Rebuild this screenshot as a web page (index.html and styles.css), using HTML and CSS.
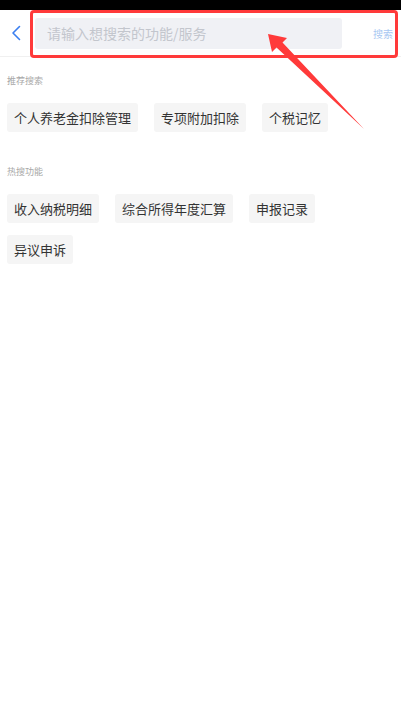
FILE: index.html
```html
<!DOCTYPE html>
<html lang="zh-CN">
<head>
<meta charset="utf-8">
<title>搜索</title>
<link rel="stylesheet" href="styles.css">
</head>
<body>
<div class="page">
  <div class="statusbar"></div>
  <div class="header">
    <div class="back">
      <svg width="10" height="16" viewBox="0 0 10 16"><path d="M8.5 1.5 L2 8 L8.5 14.5" fill="none" stroke="#3a7ff0" stroke-width="1.6" stroke-linecap="round" stroke-linejoin="round"/></svg>
    </div>
    <div class="search-input">请输入想搜索的功能/服务</div>
    <div class="search-btn">搜索</div>
  </div>
  <div class="content">
    <div class="section">
      <div class="label">推荐搜索</div>
      <div class="tags">
        <span class="tag">个人养老金扣除管理</span>
        <span class="tag">专项附加扣除</span>
        <span class="tag">个税记忆</span>
      </div>
    </div>
    <div class="section">
      <div class="label">热搜功能</div>
      <div class="tags">
        <span class="tag">收入纳税明细</span>
        <span class="tag">综合所得年度汇算</span>
        <span class="tag">申报记录</span>
        <span class="tag">异议申诉</span>
      </div>
    </div>
  </div>
  <div class="highlight"></div>
  <svg class="pointer" width="401" height="140" viewBox="0 0 401 140">
    <polygon points="268,34 287,38 282.5,42.5 364,129 276.5,47.5 272,52" fill="#ff3a3a"/>
  </svg>
</div>
</body>
</html>
```
FILE: styles.css
```css
html, body {
  margin: 0;
  padding: 0;
  background: #fff;
}
body {
  font-family: "Noto Sans CJK SC", "Noto Sans", sans-serif;
  color: #333;
}
.page {
  position: relative;
  width: 401px;
  height: 720px;
  overflow: hidden;
  background: #fff;
}
.statusbar {
  height: 10px;
  background: #000;
}
.header {
  height: 46px;
  display: flex;
  align-items: center;
  border-bottom: 1px solid #f0f0f0;
}
.back {
  width: 35px;
  display: flex;
  align-items: center;
  padding-left: 11px;
  box-sizing: border-box;
}
.back svg { display: block; }
.search-input {
  width: 307px;
  height: 31px;
  box-sizing: border-box;
  background: #f0f1f5;
  border-radius: 3px;
  padding-left: 12px;
  font-size: 14px;
  line-height: 31px;
  color: #c3c6cd;
  margin-top: 1px;
}
.search-btn {
  margin-left: 31px;
  font-size: 10px;
  color: #a9c8f2;
  letter-spacing: 0;
}
.content {
  padding: 18px 7px 0;
}
.section + .section {
  margin-top: 34px;
}
.label {
  font-size: 9px;
  line-height: 12px;
  color: #a8a8a8;
  margin-bottom: 16px;
}
.tags {
  display: flex;
  flex-wrap: wrap;
  gap: 12px 16px;
}
.tag {
  display: block;
  height: 29px;
  line-height: 29px;
  padding: 0 7px;
  background: #f5f5f5;
  border-radius: 3px;
  font-size: 13px;
  color: #333;
}
.highlight {
  position: absolute;
  left: 30px;
  top: 10px;
  width: 368px;
  height: 48px;
  box-sizing: border-box;
  border: 3px solid #ff3a3a;
  border-radius: 4px;
}
.pointer {
  position: absolute;
  left: 0;
  top: 0;
}
```
